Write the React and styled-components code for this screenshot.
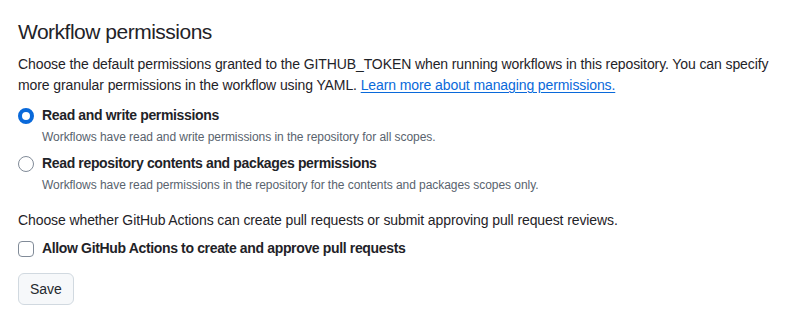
import React, { useState } from "react";
import styled, { createGlobalStyle } from "styled-components";

const GlobalStyle = createGlobalStyle`
  body {
    margin: 0;
    background: #ffffff;
    font-family: "Segoe UI", "Liberation Sans", Arial, sans-serif;
    color: #1f2328;
  }
`;

const Page = styled.div`
  padding: 17px 18px 0;
  width: 800px;
  box-sizing: border-box;
`;

const Heading = styled.h2`
  margin: 0 0 7px;
  font-size: 21px;
  line-height: 30px;
  font-weight: 400;
  letter-spacing: -0.5px;
`;

const Text = styled.p`
  margin: 0;
  font-size: 14px;
  line-height: 21px;
  letter-spacing: -0.1px;
  margin-bottom: ${(p) => p.$gap || 0}px;
`;

const Link = styled.a`
  color: #0969da;
  text-decoration: underline;
  text-underline-offset: 2px;
`;

const Option = styled.label`
  display: grid;
  grid-template-columns: 16px 1fr;
  column-gap: 8px;
  align-items: center;
  margin-bottom: ${(p) => p.$gap || 0}px;
  cursor: pointer;
`;

const Radio = styled.span`
  width: 16px;
  height: 16px;
  box-sizing: border-box;
  border-radius: 50%;
  border: ${(p) => (p.$checked ? "4px solid #0969da" : "1px solid #818b98")};
  background: #ffffff;
`;

const Checkbox = styled.span`
  width: 16px;
  height: 16px;
  box-sizing: border-box;
  border-radius: 4px;
  border: 1px solid #818b98;
  background: ${(p) => (p.$checked ? "#0969da" : "#ffffff")};
`;

const OptionTitle = styled.span`
  font-size: 14px;
  line-height: 21px;
  font-weight: 600;
  letter-spacing: -0.35px;
`;

const Note = styled.span`
  grid-column: 2;
  font-size: 12px;
  line-height: 18px;
  color: #59636e;
  margin-top: 2px;
  letter-spacing: -0.05px;
`;

const Button = styled.button`
  height: 32px;
  padding: 0 11px;
  border: 1px solid #d1d9e0;
  border-radius: 6px;
  background: #f6f8fa;
  color: #25292e;
  font-family: inherit;
  font-size: 14px;
  font-weight: 500;
  cursor: pointer;
`;

const options = [
  {
    id: "write",
    title: "Read and write permissions",
    note: "Workflows have read and write permissions in the repository for all scopes.",
  },
  {
    id: "read",
    title: "Read repository contents and packages permissions",
    note: "Workflows have read permissions in the repository for the contents and packages scopes only.",
  },
];

export default function App() {
  const [perm, setPerm] = useState("write");
  const [allow, setAllow] = useState(false);

  return (
    <Page>
      <GlobalStyle />
      <Heading>Workflow permissions</Heading>
      <Text $gap={9}>
        Choose the default permissions granted to the GITHUB_TOKEN when running workflows in this
        repository. You can specify more granular permissions in the workflow using YAML.{" "}
        <Link href="#">Learn more about managing permissions.</Link>
      </Text>

      {options.map((o, i) => (
        <Option key={o.id} $gap={i === 0 ? 7 : 16} onClick={() => setPerm(o.id)}>
          <Radio $checked={perm === o.id} />
          <OptionTitle>{o.title}</OptionTitle>
          <Note>{o.note}</Note>
        </Option>
      ))}

      <Text $gap={7}>
        Choose whether GitHub Actions can create pull requests or submit approving pull request
        reviews.
      </Text>
      <Option $gap={14} onClick={() => setAllow(!allow)}>
        <Checkbox $checked={allow} />
        <OptionTitle>Allow GitHub Actions to create and approve pull requests</OptionTitle>
      </Option>

      <Button>Save</Button>
    </Page>
  );
}
